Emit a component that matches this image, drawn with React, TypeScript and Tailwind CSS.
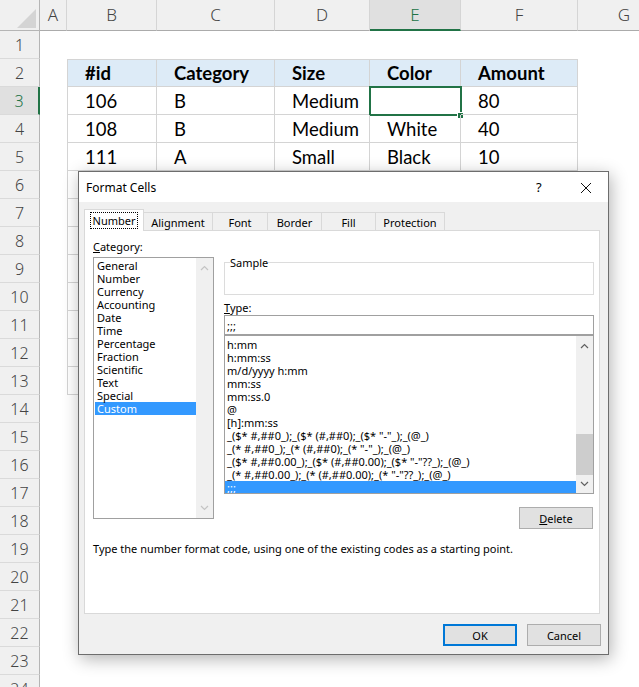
import React from "react";

const COLS: [string, string][] = [
  ["A", "w-[27px]"],
  ["B", "w-[90px]"],
  ["C", "w-[118px]"],
  ["D", "w-[95px]"],
  ["E", "w-[91px]"],
  ["F", "w-[117px]"],
  ["G", "w-[93px]"],
];

const DATA: Record<number, string[]> = {
  2: ["#id", "Category", "Size", "Color", "Amount"],
  3: ["106", "B", "Medium", "", "80"],
  4: ["108", "B", "Medium", "White", "40"],
  5: ["111", "A", "Small", "Black", "10"],
};

const CATEGORIES = [
  "General", "Number", "Currency", "Accounting", "Date", "Time",
  "Percentage", "Fraction", "Scientific", "Text", "Special", "Custom",
];

const TYPES = [
  "h:mm",
  "h:mm:ss",
  "m/d/yyyy h:mm",
  "mm:ss",
  "mm:ss.0",
  "@",
  "[h]:mm:ss",
  '_($* #,##0_);_($* (#,##0);_($* "-"_);_(@_)',
  '_(* #,##0_);_(* (#,##0);_(* "-"_);_(@_)',
  '_($* #,##0.00_);_($* (#,##0.00);_($* "-"??_);_(@_)',
  '_(* #,##0.00_);_(* (#,##0.00);_(* "-"??_);_(@_)',
  ";;;",
];

const TABS: [string, string][] = [
  ["Number", "w-[60px]"],
  ["Alignment", "w-[69px]"],
  ["Font", "w-[55px]"],
  ["Border", "w-[54px]"],
  ["Fill", "w-[54px]"],
  ["Protection", "w-[69px]"],
];

function Chevron({ up, color }: { up?: boolean; color: string }) {
  return (
    <svg width="9" height="6" viewBox="0 0 9 6" className="block">
      <polyline
        points={up ? "1,5 4.5,1.5 8,5" : "1,1 4.5,4.5 8,1"}
        fill="none"
        stroke={color}
        strokeWidth="1.2"
      />
    </svg>
  );
}

function Sheet() {
  return (
    <div className="font-['Lato',sans-serif] text-black">
      <div className="flex h-[31px]">
        <div className="w-[40px] shrink-0 bg-[#f0f0f0] border-r border-b border-[#b5b5b5]">
          <svg width="40" height="31" className="block">
            <polygon points="36,9 36,28 17,28" fill="#d4d4d4" />
          </svg>
        </div>
        {COLS.map(([c, w]) => (
          <div
            key={c}
            className={`${w} shrink-0 flex items-center justify-center text-[17px] font-['Noto_Sans',sans-serif] font-light ${
              c === "E"
                ? "bg-[#e0e0e0] border-b-2 border-b-[#217346] border-r border-r-[#d5d5d5] text-[#217346]"
                : "bg-[#f0f0f0] border-b border-b-[#ababab] border-r border-r-[#d5d5d5] text-[#444]"
            }`}
          >
            {c}
          </div>
        ))}
      </div>
      {Array.from({ length: 24 }, (_, i) => i + 1).map((r) => (
        <div key={r} className="flex h-[28px]">
          <div
            className={`w-[40px] shrink-0 flex items-center justify-center border-b border-b-[#dadada] text-[16px] font-['Noto_Sans',sans-serif] font-light ${
              r === 3
                ? "bg-[#e0e0e0] border-r-2 border-r-[#217346] text-[#217346]"
                : "bg-[#f0f0f0] border-r border-r-[#b5b5b5] text-[#444]"
            }`}
          >
            {r}
          </div>
          {COLS.map(([c, w], ci) => {
            const inTable = r >= 2 && r <= 13 && ci >= 1 && ci <= 5;
            const text = DATA[r]?.[ci - 1] ?? "";
            return (
              <div
                key={c}
                className={`${w} shrink-0 h-full flex items-center pl-[17px] pt-[2px] text-[18.5px] relative ${
                  inTable ? "border-r border-b border-[#d4d4d4]" : ""
                } ${inTable && ci === 1 ? "border-l pl-[16px]" : ""} ${
                  inTable && r === 2 ? "border-t bg-[#ddebf7] font-bold" : ""
                }`}
              >
                {text}
                {r === 3 && c === "E" && (
                  <>
                    <div className="absolute left-[-1px] top-[-1px] w-[93px] h-[30px] border-2 border-[#217346]" />
                    <div className="absolute left-[87px] top-[25px] w-[7px] h-[7px] bg-[#217346] border border-white" />
                  </>
                )}
              </div>
            );
          })}
        </div>
      ))}
    </div>
  );
}

function Dialog() {
  return (
    <div className="absolute left-[78px] top-[171px] w-[531px] h-[484px] border border-[#6d6d6d] bg-[#f0f0f0] shadow-[2px_4px_16px_rgba(0,0,0,0.3)] flex flex-col font-['Noto_Sans',sans-serif] text-[11px] leading-[13px] text-black">
      <div className="h-[30px] shrink-0 bg-white flex items-center pl-[7px] text-[12px] relative">
        Format Cells
        <span className="absolute left-[457px] top-[7px] text-[13px] leading-[16px]">?</span>
        <svg width="12" height="12" viewBox="0 0 12 12" className="absolute left-[501px] top-[10px]">
          <path d="M1 1 L11 11 M11 1 L1 11" stroke="#111" strokeWidth="1" />
        </svg>
      </div>
      <div className="flex-1 flex flex-col pl-[5px] pr-[8px] pt-[7px]">
        <div className="flex items-end h-[21px]">
          {TABS.map(([t, w], i) =>
            i === 0 ? (
              <div
                key={t}
                className={`${w} h-[22px] -mb-px relative z-10 bg-white border border-b-0 border-[#d9d9d9] flex items-center justify-center`}
              >
                <span className="outline outline-1 outline-dotted outline-black px-[2px] py-[1px]">{t}</span>
              </div>
            ) : (
              <div
                key={t}
                className={`${w} h-[18px] border-t border-r border-[#d9d9d9] flex items-center justify-center pt-[1px]`}
              >
                {t}
              </div>
            )
          )}
        </div>
        <div className="h-[384px] shrink-0 bg-white border border-[#d9d9d9] flex flex-col pl-[8px] pr-[5px] pt-[9px]">
          <div className="flex gap-[10px]">
            <div className="w-[121px] shrink-0 flex flex-col">
              <div className="h-[13px]">
                <span className="underline">C</span>ategory:
              </div>
              <div className="mt-[4px] h-[262px] border border-[#a0a0a0] flex">
                <div className="flex-1 pt-[1px] pl-[1px]">
                  {CATEGORIES.map((c) => (
                    <div
                      key={c}
                      className={`h-[13px] pl-[2px] ${c === "Custom" ? "bg-[#3399ff] text-white" : ""}`}
                    >
                      {c}
                    </div>
                  ))}
                </div>
                <div className="w-[17px] bg-[#f0f0f0] flex flex-col items-center justify-between py-[7px]">
                  <Chevron up color="#c4c4c4" />
                  <Chevron color="#c4c4c4" />
                </div>
              </div>
            </div>
            <div className="flex-1 flex flex-col pt-[16px]">
              <fieldset className="border border-[#dcdcdc] px-[5px]">
                <legend className="leading-[13px]">Sample</legend>
                <div className="h-[25px]" />
              </fieldset>
              <div className="mt-[6px] h-[13px]">
                <span className="underline">T</span>ype:
              </div>
              <div className="mt-[1px] h-[20px] border border-[#a0a0a0] flex items-center pl-[2px]">;;;</div>
              <div className="h-[159px] border border-[#a0a0a0] flex">
                <div className="flex-1 pt-[2px] overflow-hidden">
                  {TYPES.map((t) => (
                    <div
                      key={t}
                      className={`h-[13px] pl-[2px] whitespace-pre ${t === ";;;" ? "bg-[#3399ff] text-white" : ""}`}
                    >
                      {t}
                    </div>
                  ))}
                </div>
                <div className="w-[17px] bg-[#f0f0f0] flex flex-col items-center pt-[7px] pb-[6px]">
                  <Chevron up color="#606060" />
                  <div className="flex-1 w-full flex flex-col justify-end pb-[6px]">
                    <div className="h-[41px] w-full bg-[#cdcdcd]" />
                  </div>
                  <Chevron color="#606060" />
                </div>
              </div>
              <div className="mt-[13px] self-end mr-[1px] w-[74px] h-[22px] bg-[#e1e1e1] border border-[#adadad] flex items-center justify-center">
                <span>
                  <span className="underline">D</span>elete
                </span>
              </div>
            </div>
          </div>
          <div className="mt-[13px]">Type the number format code, using one of the existing codes as a starting point.</div>
        </div>
        <div className="mt-[10px] flex justify-end gap-[10px] mr-[-1px]">
          <div className="w-[74px] h-[22px] bg-[#e1e1e1] border-2 border-[#0078d7] flex items-center justify-center">OK</div>
          <div className="w-[74px] h-[22px] bg-[#e1e1e1] border border-[#adadad] flex items-center justify-center">Cancel</div>
        </div>
      </div>
    </div>
  );
}

export default function App() {
  return (
    <div className="relative w-[639px] h-[687px] overflow-hidden bg-white">
      <Sheet />
      <Dialog />
    </div>
  );
}
